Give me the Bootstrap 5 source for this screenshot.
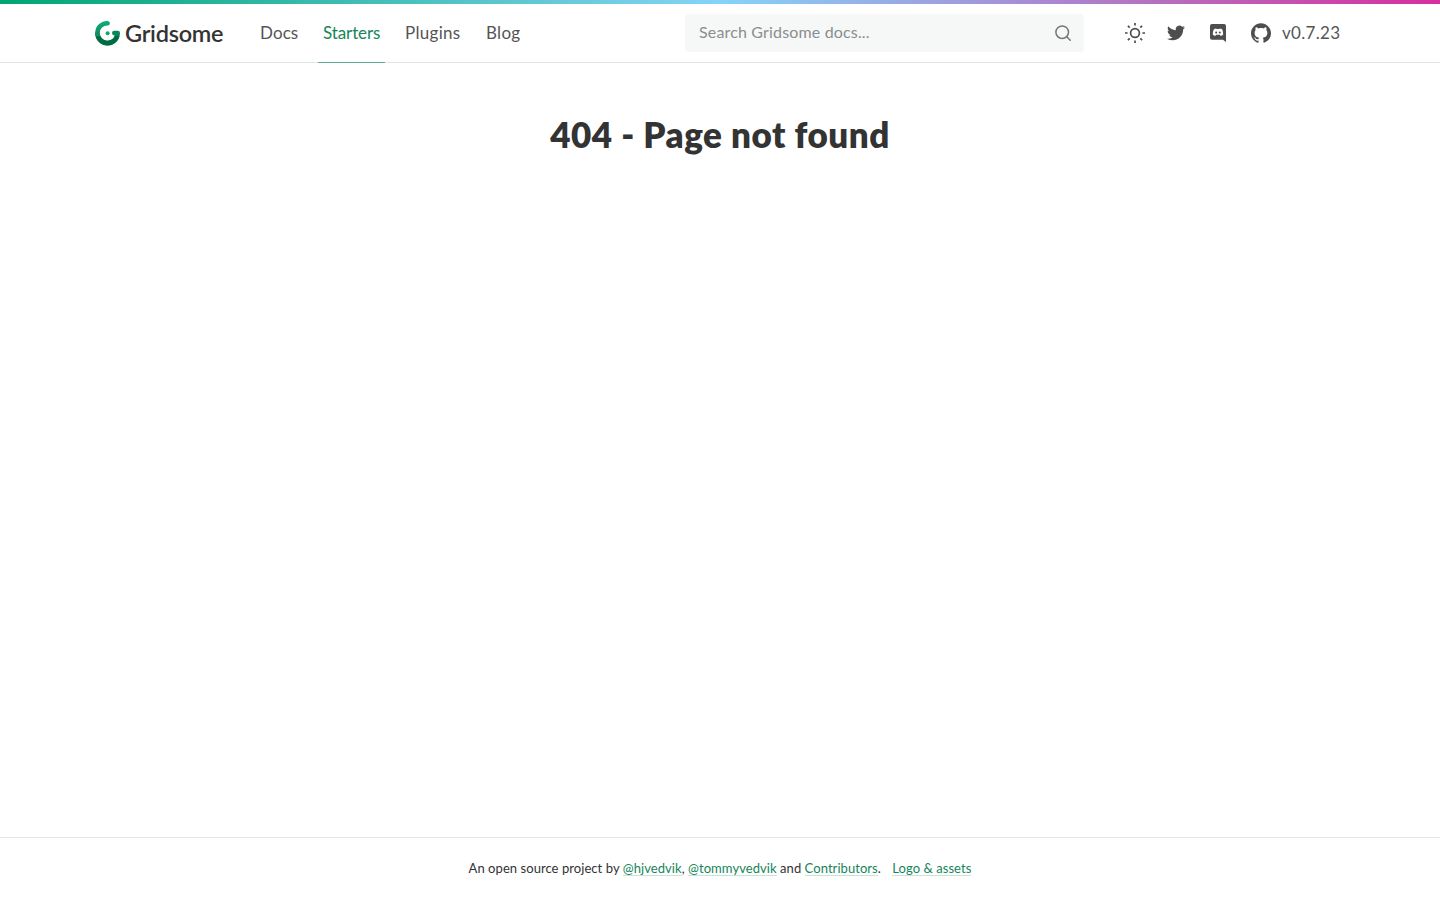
<!DOCTYPE html>
<html lang="en">
<head>
<meta charset="utf-8">
<meta name="viewport" content="width=device-width, initial-scale=1">
<title>404 - Page not found - Gridsome</title>
<link href="https://cdn.jsdelivr.net/npm/bootstrap@5.3.0/dist/css/bootstrap.min.css" rel="stylesheet">
<style>
body{font-family:Lato,"Liberation Sans",sans-serif;color:#333;background:#fff}
.rainbow{height:4px;background:linear-gradient(90deg,#00a672 0%,#84d4f7 50%,#d62e9f 100%)}
.site-header{height:63px;border-bottom:1px solid #e2e6e8}
.bar-inner{padding-left:95px;padding-right:100px;height:58px}
.brand-text{font-size:23.5px;font-weight:600;line-height:30px;letter-spacing:-.25px;color:#333;width:101px;padding-left:1px;white-space:nowrap}
.site-nav .nav-link{font-size:17px;line-height:26px;color:#555;letter-spacing:.3px;height:59px;padding:16px 5px 0;white-space:nowrap}
.site-nav .nav-link.active{color:#158558;border-bottom:1px solid #5aae8d;letter-spacing:-.1px}
.site-nav{gap:15px;margin-left:30px;height:58px}
.site-nav .w-docs{width:48px;letter-spacing:.1px}.w-starters{width:67px}.w-plugins{width:66px}.w-blog{width:44px}
.search-box{width:399px;height:38px;background:#f6f8f8;border-radius:4px;padding:0 13px 0 14px;margin-right:41px;color:#8a8d8d;font-size:16px;letter-spacing:.16px}
.search-box span{padding-bottom:2px}
.tools{color:#4e4e4e}
.version{font-size:17px;letter-spacing:.3px;color:#555;width:58px;margin-left:11px;white-space:nowrap}
h1{font-size:35px;font-weight:800;line-height:44px;margin-top:49px;color:#333;letter-spacing:.5px;white-space:nowrap}
.site-footer{height:63px;border-top:1px solid #e2e6e8;font-size:13px;line-height:20px;padding-top:20px;letter-spacing:.06px;white-space:nowrap}
.site-footer a{color:#158558;text-decoration:none;border-bottom:1px solid #c5e3d6;display:inline-block;line-height:14px}
</style>
</head>
<body class="d-flex flex-column min-vh-100">
<header class="site-header">
  <div class="rainbow"></div>
  <div class="bar-inner d-flex align-items-center">
    <a class="d-flex align-items-center text-decoration-none" href="#">
      <svg width="25" height="26" viewBox="0 0 25 26" fill="none">
        <defs><linearGradient id="lg" x1="0" y1="0" x2="0" y2="1"><stop offset="0" stop-color="#08ac76"/><stop offset="1" stop-color="#119064"/></linearGradient></defs>
        <path d="M12.6 3.2A9.9 9.9 0 0 0 2.4 13" stroke="url(#lg)" stroke-width="4.6" stroke-linecap="round"/>
        <path d="M.1 13A12.4 12.4 0 0 0 25 13a2.3 2.3 0 0 0-2.3-2.2h-3.4a2.3 2.3 0 0 0 0 4.6h.6A7.8 7.8 0 0 1 4.7 13z" fill="#07885c"/>
        <path d="M.5 16.3A12.4 12.4 0 0 0 24.5 16.3l-4.6-.9A7.8 7.8 0 0 1 5.4 16z" fill="#006b42"/>
        <path d="M.1 12.5h4.6L5.4 16.3H.5z" fill="#119064"/>
        <circle cx="12.6" cy="13.2" r="2" fill="#0aa873"/>
      </svg>
      <span class="brand-text ms-1">Gridsome</span>
    </a>
    <nav class="nav site-nav flex-nowrap">
      <a class="nav-link w-docs" href="#">Docs</a>
      <a class="nav-link w-starters active" href="#">Starters</a>
      <a class="nav-link w-plugins" href="#">Plugins</a>
      <a class="nav-link w-blog" href="#">Blog</a>
    </nav>
    <div class="search-box d-flex align-items-center justify-content-between ms-auto">
      <span>Search Gridsome docs...</span>
      <svg width="16" height="16" viewBox="0 0 16 16" fill="none" stroke="#777" stroke-width="1.5" stroke-linecap="round"><circle cx="7.2" cy="7.2" r="6.3"/><path d="M11.8 11.8l3.4 3.4"/></svg>
    </div>
    <div class="tools d-flex align-items-center">
      <svg width="20" height="20" viewBox="0 0 20 20" fill="none" stroke="currentColor" stroke-width="1.7"><circle cx="10" cy="10" r="4.4"/><path d="M10 0v2.6M10 17.4V20M0 10h2.6M17.4 10H20M2.9 2.9l1.8 1.8M15.3 15.3l1.8 1.8M2.9 17.1l1.8-1.8M15.3 4.7l1.8-1.8"/></svg>
      <svg style="margin-left:22px" width="18" height="18" viewBox="0 0 24 24" fill="currentColor"><path d="M23.953 4.57a10 10 0 01-2.825.775 4.958 4.958 0 002.163-2.723c-.951.555-2.005.959-3.127 1.184a4.92 4.92 0 00-8.384 4.482C7.69 8.095 4.067 6.13 1.64 3.162a4.822 4.822 0 00-.666 2.475c0 1.71.87 3.213 2.188 4.096a4.904 4.904 0 01-2.228-.616v.06a4.923 4.923 0 003.946 4.827 4.996 4.996 0 01-2.212.085 4.936 4.936 0 004.604 3.417 9.867 9.867 0 01-6.102 2.105c-.39 0-.779-.023-1.17-.067a13.995 13.995 0 007.557 2.209c9.053 0 13.998-7.496 13.998-13.985 0-.21 0-.42-.015-.63A9.935 9.935 0 0024 4.59z"/></svg>
      <svg style="margin-left:25px" width="16" height="18" viewBox="0 0 16 18"><path fill="currentColor" d="M1.9 0h12.2A1.9 1.9 0 0 1 16 1.9V18l-3-2.3H1.9A1.9 1.9 0 0 1 0 13.8V1.9A1.9 1.9 0 0 1 1.9 0z"/><path fill="#fff" d="M6.2 4.5c-1.1.1-2 .6-2.4.9-.6 1.2-1 3.4-1 5 .6.9 1.6 1.3 2.7 1.3l.7-.9h3.6l.7.9c1.1 0 2.1-.4 2.7-1.3 0-1.6-.4-3.8-1-5-.4-.3-1.3-.8-2.4-.9l-.4.6H6.6z"/><circle cx="6.2" cy="8.4" r="1" fill="currentColor"/><circle cx="9.8" cy="8.4" r="1" fill="currentColor"/></svg>
      <svg style="margin-left:25px" width="20" height="20" viewBox="0 0 24 24" fill="currentColor"><path d="M12 .297c-6.63 0-12 5.373-12 12 0 5.303 3.438 9.8 8.205 11.385.6.113.82-.258.82-.577 0-.285-.01-1.04-.015-2.04-3.338.724-4.042-1.61-4.042-1.61C4.422 18.07 3.633 17.7 3.633 17.7c-1.087-.744.084-.729.084-.729 1.205.084 1.838 1.236 1.838 1.236 1.07 1.835 2.809 1.305 3.495.998.108-.776.417-1.305.76-1.605-2.665-.3-5.466-1.332-5.466-5.93 0-1.31.465-2.38 1.235-3.22-.135-.303-.54-1.523.105-3.176 0 0 1.005-.322 3.3 1.23.96-.267 1.98-.399 3-.405 1.02.006 2.04.138 3 .405 2.28-1.552 3.285-1.23 3.285-1.23.645 1.653.24 2.873.12 3.176.765.84 1.23 1.91 1.23 3.22 0 4.61-2.805 5.625-5.475 5.92.42.36.81 1.096.81 2.22 0 1.606-.015 2.896-.015 3.286 0 .315.21.69.825.57C20.565 22.092 24 17.592 24 12.297c0-6.627-5.373-12-12-12"/></svg>
      <span class="version">v0.7.23</span>
    </div>
  </div>
</header>
<main class="flex-grow-1 text-center"><h1>404 - Page not found</h1></main>
<footer class="site-footer text-center">An open source project by <a href="#">@hjvedvik</a>, <a href="#">@tommyvedvik</a> and <a href="#">Contributors</a>. <a class="ms-2" href="#">Logo &amp; assets</a></footer>
<script src="https://cdn.jsdelivr.net/npm/bootstrap@5.3.0/dist/js/bootstrap.bundle.min.js"></script>
</body>
</html>
